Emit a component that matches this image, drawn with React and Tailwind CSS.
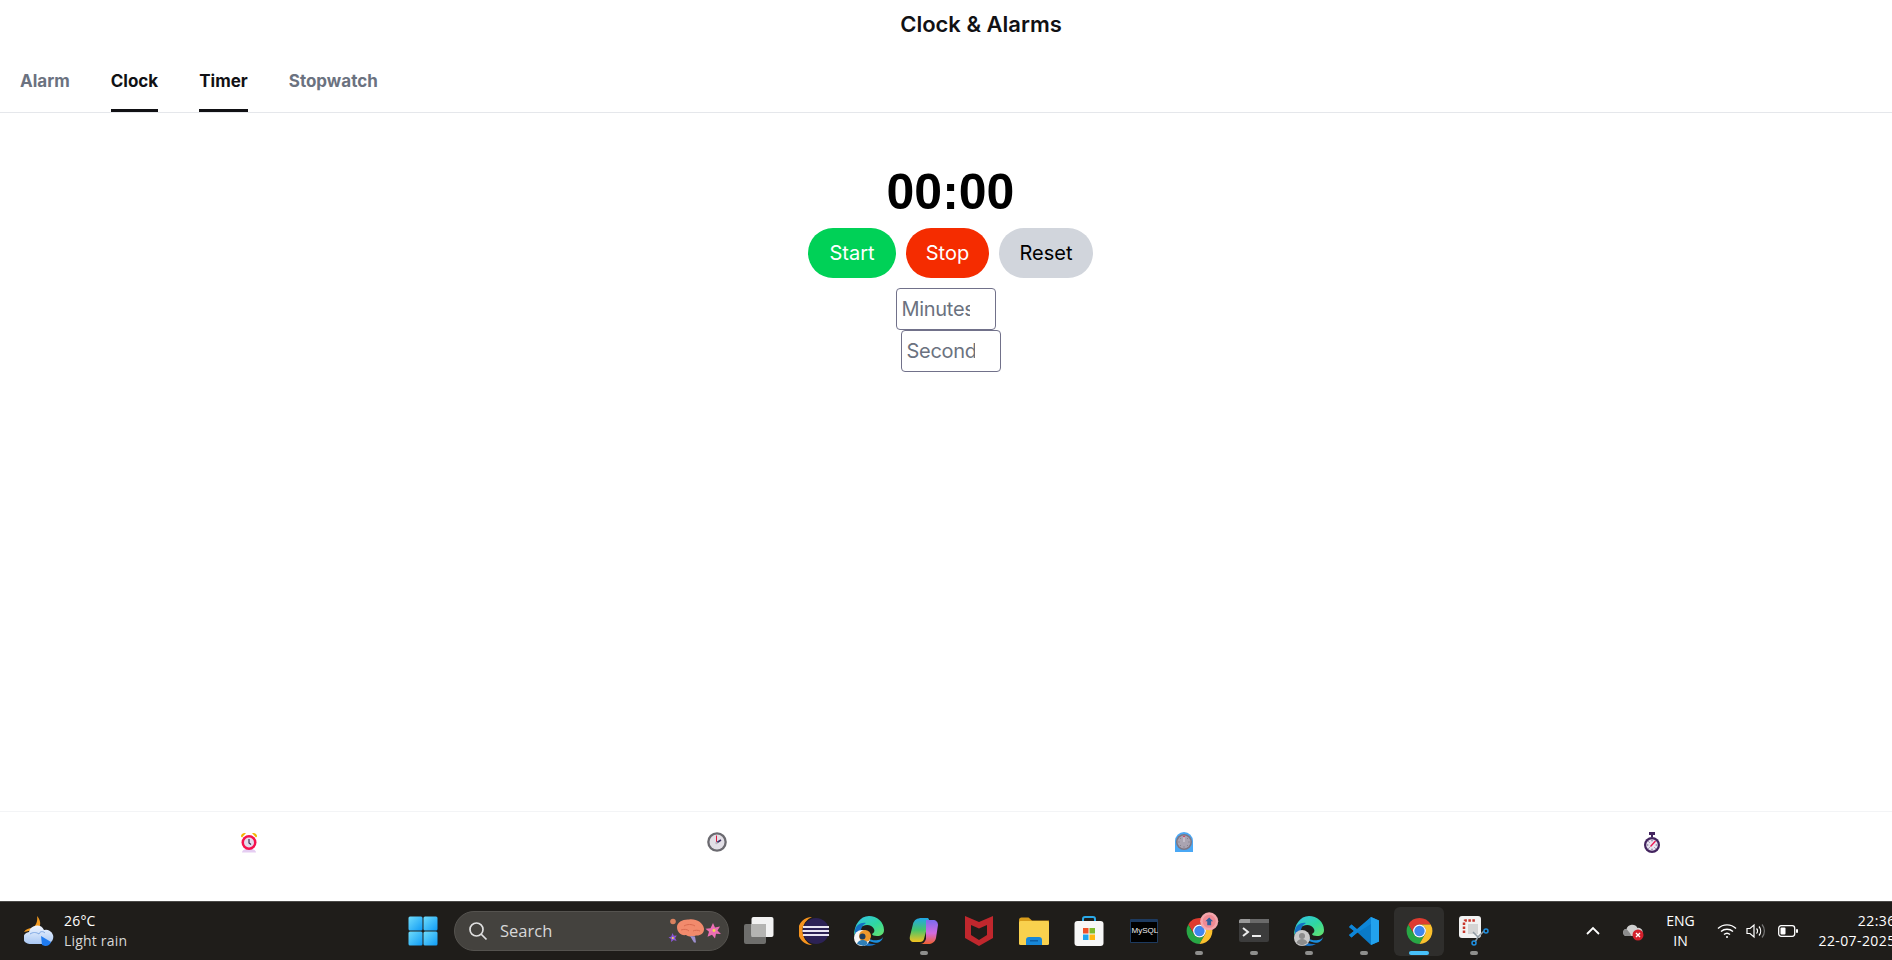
const tabs = [
  { label: "Alarm", active: false },
  { label: "Clock", active: true },
  { label: "Timer", active: true },
  { label: "Stopwatch", active: false },
];

function AlarmEmoji() {
  return (
    <svg width="18" height="21" viewBox="0 0 18 21">
      <path d="M1 4.500C1 2 3 .5 6 1L2 5.500z" fill="#f2b400" />
      <path d="M17 4.500C17 2 15 .5 12 1L16 5.500z" fill="#f2b400" />
      <path d="M2 20.500c0-2 3-4 7-4s7 2 7 4z" fill="#e5cdf2" />
      <circle cx="9" cy="10.500" r="7.500" fill="#f5124f" />
      <circle cx="9" cy="10.500" r="5" fill="#e3dcee" />
      <path d="M9 7v4l2 1.500" stroke="#3f3358" strokeWidth="1.200" fill="none" />
    </svg>
  );
}

function ClockEmoji() {
  return (
    <svg width="20" height="20" viewBox="0 0 20 20">
      <circle cx="10" cy="10" r="9.800" fill="#6b6a70" />
      <circle cx="10" cy="10" r="7.500" fill="#e2dfe6" />
      <path d="M9.500 3.500V10" stroke="#e0183f" strokeWidth="1" />
      <path d="M10 10.500L14 8" stroke="#3b2f63" strokeWidth="1.600" />
      <circle cx="9.500" cy="11" r="1.200" fill="#b9b5c0" />
    </svg>
  );
}

function MantelEmoji() {
  return (
    <svg width="18" height="20" viewBox="0 0 18 20">
      <path d="M0 20V9a9 9 0 0 1 18 0v11z" fill="#4aa8f5" />
      <circle cx="9" cy="10" r="8" fill="#7d7785" />
      <circle cx="9" cy="10" r="6.500" fill="#aaa4b1" />
      <path d="M9 4.500V10" stroke="#e8e4ec" strokeWidth="0.800" />
      <path d="M3.500 10h1M13.500 10h1M9 14.500v1M5 6l.7.700M13 6l-.7.700M5 14l.7-.700M13 14l-.7-.700" stroke="#6a6472" strokeWidth="0.800" />
      <circle cx="9" cy="4.500" r="0.800" fill="#d81b4a" />
    </svg>
  );
}

function StopwatchEmoji() {
  return (
    <svg width="16" height="21" viewBox="0 0 16 21">
      <rect x="5" y="0" width="6" height="3" fill="#43245f" />
      <rect x="7" y="3" width="2" height="2" fill="#43245f" />
      <circle cx="8" cy="13" r="8" fill="#43245f" />
      <circle cx="8" cy="13" r="5.800" fill="#e9e4f0" />
      <path d="M2.800 13h1.500M11.700 13h1.500M8 7.800v1.500M8 16.700v1.500M4.500 9.500l1 1M4.500 16.500l1-1M11.500 16.500l-1-1" stroke="#6a5a82" strokeWidth="1" />
      <path d="M6.500 14.500L11.500 9" stroke="#ee1650" strokeWidth="1.300" />
    </svg>
  );
}

function WeatherIcon() {
  return (
    <svg width="32" height="32" viewBox="0 0 32 32">
      <defs>
        <linearGradient id="cloudFill" x1="0" y1="0" x2="0" y2="1">
          <stop offset="0" stopColor="#f0f5fe" />
          <stop offset="1" stopColor="#a9c8f4" />
        </linearGradient>
      </defs>
      <path d="M13 1c3 3 5 9 1 13L0 17c2-3 5-4 8-4 4-2 6-7 5-12z" fill="#f29a1f" />
      <path d="M6 29a6 6 0 0 1-1-12 8 8 0 0 1 15-2 7 7 0 0 1 4 14z" fill="url(#cloudFill)" />
      <path d="M6 19c3-2 6-2 9 0 1-3 4-3 6-1" stroke="#7fa8e4" strokeWidth="1" fill="none" />
      <path d="M17 21l10 6a6 6 0 0 1-6 4l-3-1z" fill="#1f7bf0" />
    </svg>
  );
}

function WindowsLogo() {
  return (
    <svg width="30" height="30" viewBox="0 0 30 30">
      <defs>
        <linearGradient id="winFill" x1="0" y1="0" x2="1" y2="1">
          <stop offset="0" stopColor="#6fdcfb" />
          <stop offset="1" stopColor="#0f9bf5" />
        </linearGradient>
      </defs>
      <rect x="0.500" y="0.500" width="14" height="14" rx="1.500" fill="url(#winFill)" />
      <rect x="15.500" y="0.500" width="14" height="14" rx="1.500" fill="url(#winFill)" />
      <rect x="0.500" y="15.500" width="14" height="14" rx="1.500" fill="url(#winFill)" />
      <rect x="15.500" y="15.500" width="14" height="14" rx="1.500" fill="url(#winFill)" />
    </svg>
  );
}

function SearchArt() {
  return (
    <svg width="54" height="26" viewBox="0 0 54 26">
      <circle cx="5" cy="3.500" r="2.800" fill="#d9815f" />
      <path d="M9 9c0-5 6-8 12-7.500 7-1 14 3 15 9 .5 5-4 7.500-8 7-3 1.500-7 1.500-10-.5C13 18 9 14 9 9z" fill="#f28a6c" />
      <path d="M16 8c3-2 8-2 11 0M13 12c3-1 6-1 8 1M25 13c2-1 5-1 7 0" stroke="#d96a50" strokeWidth="1" fill="none" />
      <path d="M22 18l5 .5 1 6h-2z" fill="#9d8fd0" />
      <path d="M4.500 15l1.300 2.800 3 -.3-1.700 2.500 1.500 3-3-1-2.500 2 .1-3L.5 19.500l2.800-1z" fill="#8a55d8" />
      <circle cx="4.800" cy="20" r="1" fill="#f0df4a" />
      <path d="M45 5l2 4.500 5-1-2.500 4 3.500 3.500-5-.3-1 4.800-3-3.800-4.500 2 1.500-5-3.500-3 5 -.5z" fill="#ee6fb5" />
      <circle cx="46" cy="12.500" r="1.400" fill="#f0df4a" />
    </svg>
  );
}

function TaskView() {
  return (
    <svg width="30" height="30" viewBox="0 0 30 30">
      <rect x="0" y="8" width="22" height="20" rx="2" fill="#6e6e6c" />
      <rect x="7.500" y="1" width="22" height="20" rx="2" fill="#f2f2f2" />
      <rect x="7.500" y="8" width="14.500" height="13" fill="#b4b4b2" />
    </svg>
  );
}

function Eclipse() {
  return (
    <svg width="30" height="30" viewBox="0 0 30 30">
      <path d="M13 1a14 14 0 0 0 0 28A15 15 0 0 1 13 1z" fill="#f7941e" />
      <circle cx="17" cy="15" r="13" fill="#2c2255" />
      <path d="M4 11h26M3.500 15h27M4 19h26" stroke="#e9e6f2" strokeWidth="2" />
    </svg>
  );
}

function Edge({ badge }) {
  return (
    <svg width="30" height="30" viewBox="0 0 30 30">
      <defs>
        <linearGradient id={`edgeTop${badge}`} x1="0" y1="0" x2="1" y2="1">
          <stop offset="0" stopColor="#35c1f1" />
          <stop offset="0.550" stopColor="#2fd7a0" />
          <stop offset="1" stopColor="#6be36a" />
        </linearGradient>
      </defs>
      <path d="M15 0c8 0 15 6 15 14 0 4-3 6-7 6-3 0-5-1-5-2 2-1 3-3 2-5-2-4-7-5-11-3-5 2-8 6-9 10C0 9 6 0 15 0z" fill={`url(#edgeTop${badge})`} />
      <path d="M1 14c1-5 6-8 11-7-4 2-6 7-5 12 1 5 6 9 12 9l3 0c-2 1-5 2-7 2C7 30 0 23 1 14z" fill="#1570c4" />
      <path d="M18 26c-4-1-8-5-8-9 2 6 8 8 14 7 2 0 4-1 5-3-1 5-6 7-11 5z" fill="#1b8fdf" />
      {badge === "photo" ? (
        <g>
          <circle cx="8" cy="22" r="8" fill="#f7f7f7" />
          <circle cx="11" cy="20" r="6" fill="#f0992c" />
          <circle cx="8.500" cy="20.500" r="3" fill="#1f3d5c" />
          <path d="M3 28c1-3 3-4 5.500-4s5 1 5 4l-4 2z" fill="#2f7fb8" />
        </g>
      ) : (
        <g>
          <circle cx="8" cy="22" r="8" fill="#c9c9c9" />
          <circle cx="8" cy="20" r="3" fill="#8c8c8c" />
          <path d="M2.500 27c1-3 3-4 5.500-4s4.500 1 5.500 4l-5.500 2.500z" fill="#8c8c8c" />
        </g>
      )}
    </svg>
  );
}

function Copilot() {
  return (
    <svg width="30" height="30" viewBox="0 0 30 30">
      <defs>
        <linearGradient id="copA" x1="0" y1="0" x2="0" y2="1">
          <stop offset="0" stopColor="#21a7e8" />
          <stop offset="0.500" stopColor="#45c46b" />
          <stop offset="1" stopColor="#f4c21f" />
        </linearGradient>
        <linearGradient id="copB" x1="0" y1="0" x2="0" y2="1">
          <stop offset="0" stopColor="#7a6cf0" />
          <stop offset="0.550" stopColor="#d26be0" />
          <stop offset="1" stopColor="#f0602f" />
        </linearGradient>
      </defs>
      <path d="M13 2h5c1 0 2 .5 2 2l-5 19c-.5 2-2 3-4 3H5c-3 0-5-2-4-6l3-12C5 4 8 2 13 2z" fill="url(#copA)" />
      <path d="M17 4h7c3 0 5 2 5 5l-2 13c-1 4-4 6-8 6h-8c3 0 5-2 6-5z" fill="url(#copB)" />
    </svg>
  );
}

function McAfee() {
  return (
    <svg width="28" height="30" viewBox="0 0 28 30">
      <path fillRule="evenodd" d="M0 0l14 6 14-6v22L14 30 0 22zM6 9v10l8 5 8-5V9l-8 3.500z" fill="#c0272d" />
    </svg>
  );
}

function Folder() {
  return (
    <svg width="30" height="30" viewBox="0 0 30 30">
      <path d="M0 4c0-1.500 1-2.500 2.500-2.500h7L13 4.500h17V10H0z" fill="#d89c1a" />
      <rect x="0" y="5" width="30" height="24" rx="1.500" fill="#f9d14e" />
      <path d="M7 29v-5c0-2 1-3 3-3h10c2 0 3 1 3 3v5z" fill="#1787d8" />
      <rect x="11" y="24" width="8" height="1.500" fill="#0b5ea6" />
    </svg>
  );
}

function Store() {
  return (
    <svg width="30" height="30" viewBox="0 0 30 30">
      <path d="M9 6V3c0-1 1-2 2-2h8c1 0 2 1 2 2v3" stroke="#2aa9e8" strokeWidth="2" fill="none" />
      <rect x="0.500" y="5" width="29" height="25" rx="3" fill="#f7f7f7" />
      <rect x="9" y="12" width="5.500" height="5.500" fill="#f0522a" />
      <rect x="15.500" y="12" width="5.500" height="5.500" fill="#7fba2b" />
      <rect x="9" y="18.500" width="5.500" height="5.500" fill="#1fa4ef" />
      <rect x="15.500" y="18.500" width="5.500" height="5.500" fill="#ffb70f" />
    </svg>
  );
}

function MySqlShell() {
  return (
    <svg width="28" height="24" viewBox="0 0 28 24">
      <rect x="0" y="0" width="28" height="24" rx="1" fill="#1d3a5f" />
      <rect x="1" y="3" width="26" height="20" fill="#000000" />
      <text x="1.500" y="13.500" fontSize="8" fill="#f0f0f0" fontFamily="Liberation Sans, sans-serif">MySQL&gt;</text>
    </svg>
  );
}

function Chrome({ badge }) {
  return (
    <svg width="31" height="30" viewBox="0 0 48 46" className="overflow-visible">
      <path d="M24 3A20 20 0 0 1 41.320 13H24A10 10 0 0 0 15.340 28L6.680 13A20 20 0 0 1 24 3Z" fill="#de3b30" />
      <path d="M6.680 13A20 20 0 0 0 24 43L32.660 28A10 10 0 0 1 15.340 28Z" fill="#28a745" />
      <path d="M41.320 13H24A10 10 0 0 1 32.660 28L24 43A20 20 0 0 0 41.320 13Z" fill="#fbc02d" />
      <circle cx="24" cy="23" r="10" fill="#ffffff" />
      <circle cx="24" cy="23" r="8" fill="#3f86ee" />
      {badge && (
        <g>
          <circle cx="39" cy="8" r="14" fill="#f4a6ac" />
          <circle cx="39" cy="8" r="10" fill="#f08a94" />
          <path d="M33 8l6-6 6 6h-3v6h-6V8z" fill="#2f5f9e" />
        </g>
      )}
    </svg>
  );
}

function Terminal() {
  return (
    <svg width="30" height="24" viewBox="0 0 30 24">
      <rect x="0" y="0" width="30" height="23" rx="2" fill="#3c3c3c" />
      <path d="M0 2c0-1 1-2 2-2h9.500v4H0z" fill="#9a9a9a" />
      <rect x="11.500" y="0" width="18.500" height="4" fill="#6a6a6a" />
      <path d="M4 9l5 4-5 4" stroke="#ececec" strokeWidth="2" fill="none" />
      <rect x="13" y="16" width="9" height="2" fill="#ececec" />
    </svg>
  );
}

function VsCode() {
  return (
    <svg width="30" height="30" viewBox="0 0 30 30">
      <path d="M22 1l8 3.500v21L22 29 8 16z" fill="#0a7bc9" />
      <path d="M22 1l8 3.500v21L22 29z" fill="#22a2ee" />
      <path d="M22 8v14L10.500 15zM2.500 8.500L0 11l5 4-5 4 2.500 2.500 7-6.500z" fill="#0a7bc9" />
      <path d="M2.500 8.500L8 13l14-12v7L8 17l-5.500 4.500L0 19l5-4-5-4z" fill="#0e86d8" />
    </svg>
  );
}

function SnippingTool() {
  return (
    <svg width="30" height="30" viewBox="0 0 30 30">
      <rect x="0" y="0" width="22" height="22" rx="3" fill="#f2f2f2" />
      <path d="M5 17V6c0-1 .5-1.500 1.500-1.500H17" stroke="#c9372c" strokeWidth="2.500" strokeDasharray="2.500 1.500" fill="none" />
      <rect x="9" y="8" width="10" height="10" fill="#d4d4d4" />
      <path d="M14 16l5 5M25 15l-6 6-3 5" stroke="#8f9aa3" strokeWidth="1.500" fill="none" />
      <circle cx="27" cy="15" r="2" stroke="#1e8fe0" strokeWidth="1.500" fill="none" />
      <circle cx="15" cy="27" r="2" stroke="#1e8fe0" strokeWidth="1.500" fill="none" />
    </svg>
  );
}

function TrayCloud() {
  return (
    <svg width="22" height="22" viewBox="0 0 22 22">
      <path d="M4 16a3.500 3.500 0 0 1-.5-7 6 6 0 0 1 11-1 4 4 0 0 1 2 8z" fill="#cfcfcf" />
      <path d="M4 16a3.500 3.500 0 0 1-.5-7c1 1 3 3 5 7z" fill="#8c8c8c" />
      <circle cx="15" cy="15" r="5.500" fill="#d3202c" />
      <path d="M13 13l4 4M17 13l-4 4" stroke="#ffffff" strokeWidth="1.300" />
    </svg>
  );
}

function Wifi() {
  return (
    <svg width="20" height="16" viewBox="0 0 20 16" fill="none" stroke="#ffffff" strokeWidth="1.400">
      <path d="M1 5.500a13 13 0 0 1 18 0" />
      <path d="M4 8.500a9 9 0 0 1 12 0" />
      <path d="M7 11.500a4.500 4.500 0 0 1 6 0" />
      <circle cx="10" cy="14" r="1" fill="#ffffff" stroke="none" />
    </svg>
  );
}

function Speaker() {
  return (
    <svg width="20" height="16" viewBox="0 0 20 16" fill="none" stroke="#ffffff" strokeWidth="1.200">
      <path d="M1 5.500h3l4-3.500v12l-4-3.500H1z" />
      <path d="M10.500 5.500a3.500 3.500 0 0 1 0 5" />
      <path d="M13 3.500a7 7 0 0 1 0 9" />
      <path d="M16 1.500a10 10 0 0 1 0 13" stroke="#777777" />
    </svg>
  );
}

function Battery() {
  return (
    <svg width="20" height="12" viewBox="0 0 20 12">
      <rect x="0.700" y="0.700" width="16" height="10.600" rx="2.500" fill="none" stroke="#ffffff" strokeWidth="1.300" />
      <rect x="2.500" y="2.500" width="5" height="7" rx="1" fill="#ffffff" />
      <rect x="18" y="4" width="2" height="4" rx="1" fill="#ffffff" />
    </svg>
  );
}

function TaskSlot({ children, dot, active }) {
  return (
    <div className={`relative flex h-[49px] w-[50px] mx-[2.5px] items-center justify-center rounded-md ${active ? "bg-[#2f2e2c]" : ""}`}>
      {children}
      {dot && <span className="absolute bottom-[1px] left-[21px] h-[4px] w-[8px] rounded-full bg-[#8f8f8d]" />}
      {active && <span className="absolute bottom-[1px] left-[15px] h-[4px] w-[20px] rounded-full bg-[#47c1fa]" />}
    </div>
  );
}

export default function App() {
  return (
    <div className="h-[960px] w-full overflow-hidden bg-white">
      <div className="flex h-[960px] w-[1901px] flex-col font-[Inter,sans-serif]">
        <header className="border-b border-[#e5e7eb]">
          <h1 className="flex h-[48px] items-center justify-center pl-[61px] text-[22px] font-semibold text-[#111114]">Clock &amp; Alarms</h1>
          <nav className="flex h-[64px] gap-[41px] pl-5">
            {tabs.map((t) => (
              <div
                key={t.label}
                className={`flex items-start border-b-[3px] pt-[21px] text-[17px] font-bold ${
                  t.active ? "border-[#111114] text-[#111114]" : "border-transparent text-[#6b7280]"
                }`}
              >
                {t.label}
              </div>
            ))}
          </nav>
        </header>

        <main className="flex flex-1 flex-col items-center pt-[49px]">
          <div className="font-['Liberation_Sans',sans-serif] text-[50px] leading-[60px] font-bold text-black">00:00</div>
          <div className="mt-[6px] flex gap-2.5">
            <button className="h-[50px] w-[88px] rounded-full bg-[#00d157] text-[20px] text-white">Start</button>
            <button className="h-[50px] w-[83px] rounded-full bg-[#f52c00] text-[20px] text-white">Stop</button>
            <button className="h-[50px] w-[94px] rounded-full bg-[#d1d5dc] text-[20px] text-black">Reset</button>
          </div>
          <input type="number" placeholder="Minutes" className="mt-[10px] mr-2.5 h-[42px] w-[100px] rounded border border-[#71718a] pl-[5px] pr-[10px] text-[20px] tracking-[-0.3px] placeholder:text-[#6b7280]" />
          <input type="number" placeholder="Seconds" className="h-[42px] w-[100px] rounded border border-[#71718a] pl-[5px] pr-[10px] text-[20px] tracking-[-0.3px] placeholder:text-[#6b7280]" />
        </main>

        <nav className="flex h-[90px] border-t border-[#f3f4f6] px-[15px] pt-[20px]">
          <div className="flex flex-1 justify-center"><AlarmEmoji /></div>
          <div className="flex flex-1 justify-center"><ClockEmoji /></div>
          <div className="flex flex-1 justify-center"><MantelEmoji /></div>
          <div className="flex flex-1 justify-center"><StopwatchEmoji /></div>
        </nav>

        <footer className="flex h-[59px] items-center border-t border-[#4a4947] bg-[#1f1d1a] font-['Open_Sans',sans-serif] text-white">
          <div className="flex w-[395px] items-center pl-[24px]">
            <WeatherIcon />
            <div className="ml-[8px] text-[14px] leading-[20px] tracking-[0.2px]">
              <div>26°C</div>
              <div className="text-[#d8d8d8]">Light rain</div>
            </div>
          </div>
          <div className="flex w-[55px] justify-center"><WindowsLogo /></div>
          <div className="ml-1 flex h-[40px] w-[275px] items-center rounded-full border border-[#55534f] bg-[#44423e] pl-[13px] pr-[6px]">
            <svg width="20" height="20" viewBox="0 0 20 20" fill="none" stroke="#e0e0e0" strokeWidth="1.700">
              <circle cx="8.500" cy="8.500" r="6.500" />
              <path d="M13 13l5.500 5.500" />
            </svg>
            <span className="ml-[12px] text-[16.5px] text-[#d8d8d8]">Search</span>
            <span className="ml-auto flex"><SearchArt /></span>
          </div>
          <div className="ml-[2.500px] flex">
            <TaskSlot><TaskView /></TaskSlot>
            <TaskSlot><Eclipse /></TaskSlot>
            <TaskSlot><Edge badge="photo" /></TaskSlot>
            <TaskSlot dot><Copilot /></TaskSlot>
            <TaskSlot><McAfee /></TaskSlot>
            <TaskSlot><Folder /></TaskSlot>
            <TaskSlot><Store /></TaskSlot>
            <TaskSlot><MySqlShell /></TaskSlot>
            <TaskSlot dot><Chrome badge /></TaskSlot>
            <TaskSlot dot><Terminal /></TaskSlot>
            <TaskSlot dot><Edge badge="user" /></TaskSlot>
            <TaskSlot dot><VsCode /></TaskSlot>
            <TaskSlot active><Chrome /></TaskSlot>
            <TaskSlot dot><SnippingTool /></TaskSlot>
          </div>
          <div className="ml-[83px] flex items-center">
            <svg width="16" height="10" viewBox="0 0 16 10" fill="none" stroke="#ffffff" strokeWidth="1.800">
              <path d="M2 8l6-6 6 6" />
            </svg>
            <div className="ml-[22px] flex"><TrayCloud /></div>
            <div className="ml-[18px] w-[36px] text-center text-[14px] leading-[20px]">
              <div>ENG</div>
              <div>IN</div>
            </div>
            <div className="ml-[18px] flex"><Wifi /></div>
            <div className="ml-[9px] flex"><Speaker /></div>
            <div className="ml-[12px] flex"><Battery /></div>
            <div className="ml-[21px] text-right text-[14px] leading-[20px] tracking-[0.4px] whitespace-nowrap">
              <div>22:36</div>
              <div>22-07-2025</div>
            </div>
          </div>
        </footer>
      </div>
    </div>
  );
}
